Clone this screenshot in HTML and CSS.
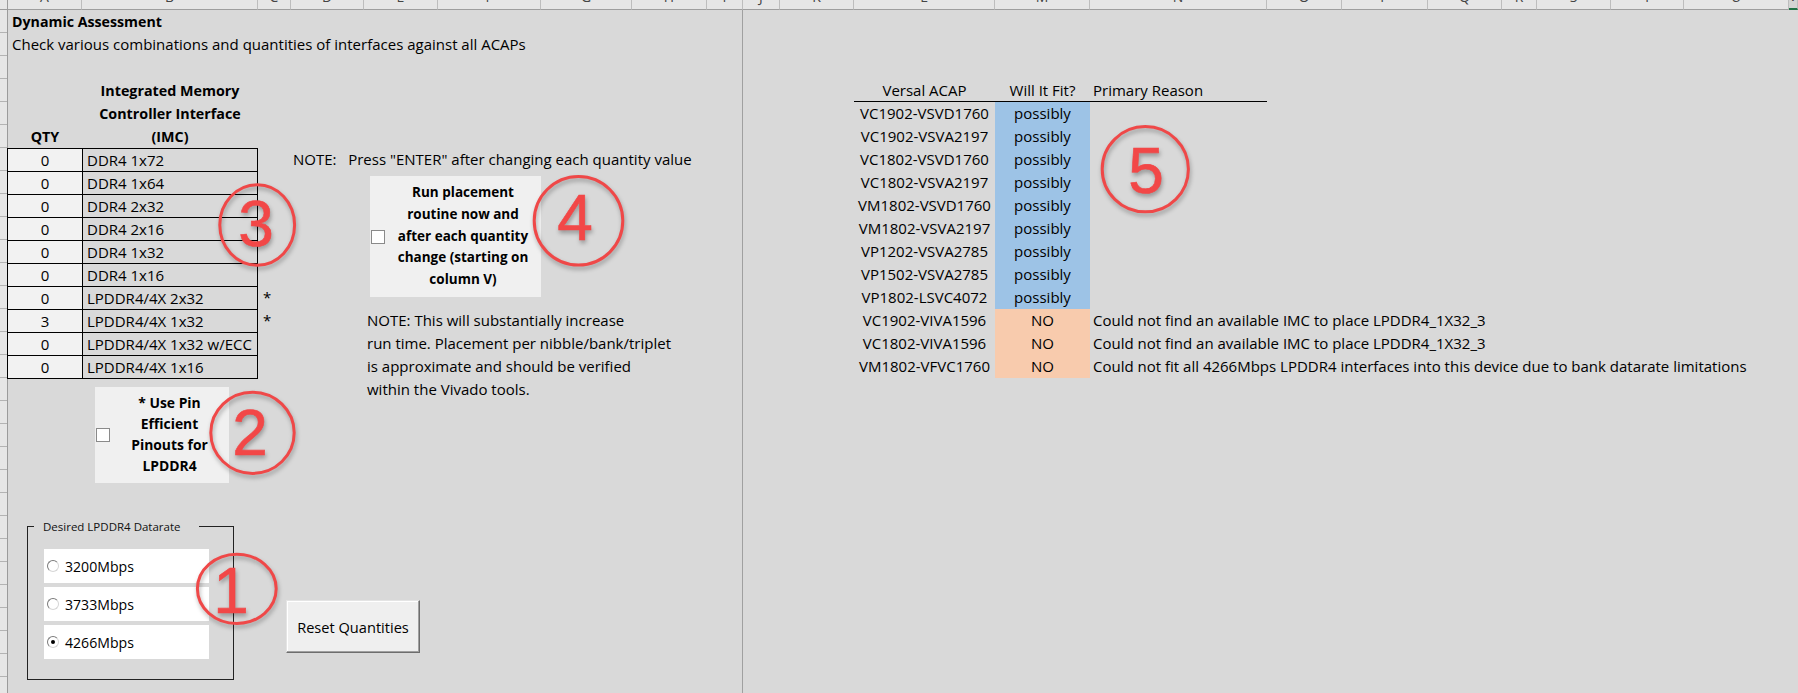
FILE: index.html
```html
<!DOCTYPE html>
<html lang="en">
<head>
<meta charset="utf-8">
<title>Dynamic Assessment</title>
<link rel="stylesheet" href="styles.css">
</head>
<body>
<div class="sheet">
  <div class="corner"></div>
  <div class="colhdr">
    <div class="ch"><span>A</span></div>
    <div class="ch"><span>B</span></div>
    <div class="ch"><span>C</span></div>
    <div class="ch"><span>D</span></div>
    <div class="ch"><span>E</span></div>
    <div class="ch"><span>F</span></div>
    <div class="ch"><span>G</span></div>
    <div class="ch"><span>H</span></div>
    <div class="ch"><span>I</span></div>
    <div class="ch"><span>J</span></div>
    <div class="ch"><span>K</span></div>
    <div class="ch"><span>L</span></div>
    <div class="ch"><span>M</span></div>
    <div class="ch"><span>N</span></div>
    <div class="ch"><span>O</span></div>
    <div class="ch"><span>P</span></div>
    <div class="ch"><span>Q</span></div>
    <div class="ch"><span>R</span></div>
    <div class="ch"><span>S</span></div>
    <div class="ch"><span>T</span></div>
    <div class="ch"><span>U</span></div>
    <div class="ch sel"><span>V</span></div>
  </div>
  <div class="rowhdr">
    <div class="rh"></div><div class="rh"></div><div class="rh"></div><div class="rh"></div><div class="rh"></div>
    <div class="rh"></div><div class="rh"></div><div class="rh"></div><div class="rh"></div><div class="rh"></div>
    <div class="rh"></div><div class="rh"></div><div class="rh"></div><div class="rh"></div><div class="rh"></div>
    <div class="rh"></div><div class="rh"></div><div class="rh"></div><div class="rh"></div><div class="rh"></div>
    <div class="rh"></div><div class="rh"></div><div class="rh"></div><div class="rh"></div><div class="rh"></div>
    <div class="rh"></div><div class="rh"></div><div class="rh"></div><div class="rh"></div><div class="rh"></div>
  </div>
  <div class="cells">
    <div class="freeze"></div>
    <div class="title">Dynamic Assessment</div>
    <div class="subtitle">Check various combinations and quantities of interfaces against all ACAPs</div>
    <div class="imc-head">Integrated Memory<br>Controller Interface<br>(IMC)</div>
    <div class="qty-head">QTY</div>
    <div class="imc-table">
      <div class="qty">0</div><div class="name">DDR4 1x72</div>
      <div class="qty">0</div><div class="name">DDR4 1x64</div>
      <div class="qty">0</div><div class="name">DDR4 2x32</div>
      <div class="qty">0</div><div class="name">DDR4 2x16</div>
      <div class="qty">0</div><div class="name">DDR4 1x32</div>
      <div class="qty">0</div><div class="name">DDR4 1x16</div>
      <div class="qty">0</div><div class="name">LPDDR4/4X 2x32</div>
      <div class="qty">3</div><div class="name">LPDDR4/4X 1x32</div>
      <div class="qty">0</div><div class="name">LPDDR4/4X 1x32 w/ECC</div>
      <div class="qty">0</div><div class="name">LPDDR4/4X 1x16</div>
    </div>
    <div class="stars"><div>*</div><div>*</div></div>
    <div class="note1">NOTE:   Press "ENTER" after changing each quantity value</div>
    <div class="note2">
      <div>NOTE: This will substantially increase</div>
      <div>run time. Placement per nibble/bank/triplet</div>
      <div>is approximate and should be verified</div>
      <div>within the Vivado tools.</div>
    </div>
    <div class="fit">
      <div class="hd dev">Versal ACAP</div><div class="hd res">Will It Fit?</div><div class="hd why">Primary Reason</div>
      <div class="dev">VC1902-VSVD1760</div><div class="res yes">possibly</div><div class="why"></div>
      <div class="dev">VC1902-VSVA2197</div><div class="res yes">possibly</div><div class="why"></div>
      <div class="dev">VC1802-VSVD1760</div><div class="res yes">possibly</div><div class="why"></div>
      <div class="dev">VC1802-VSVA2197</div><div class="res yes">possibly</div><div class="why"></div>
      <div class="dev">VM1802-VSVD1760</div><div class="res yes">possibly</div><div class="why"></div>
      <div class="dev">VM1802-VSVA2197</div><div class="res yes">possibly</div><div class="why"></div>
      <div class="dev">VP1202-VSVA2785</div><div class="res yes">possibly</div><div class="why"></div>
      <div class="dev">VP1502-VSVA2785</div><div class="res yes">possibly</div><div class="why"></div>
      <div class="dev">VP1802-LSVC4072</div><div class="res yes">possibly</div><div class="why"></div>
      <div class="dev">VC1902-VIVA1596</div><div class="res no">NO</div><div class="why">Could not find an available IMC to place LPDDR4_1X32_3</div>
      <div class="dev">VC1802-VIVA1596</div><div class="res no">NO</div><div class="why">Could not find an available IMC to place LPDDR4_1X32_3</div>
      <div class="dev">VM1802-VFVC1760</div><div class="res no">NO</div><div class="why">Could not fit all 4266Mbps LPDDR4 interfaces into this device due to bank datarate limitations</div>
    </div>
  </div>

  <div class="ctl cb4">
    <div class="chk"></div>
    <div class="ctl-label">Run placement<br>routine now and<br>after each quantity<br>change (starting on<br>column V)</div>
  </div>
  <div class="ctl cb2">
    <div class="chk"></div>
    <div class="ctl-label">* Use Pin<br>Efficient<br>Pinouts for<br>LPDDR4</div>
  </div>

  <div class="group">
    <div class="legend">Desired LPDDR4 Datarate</div>
    <div class="radios">
      <div class="opt"><span class="radio"></span>3200Mbps</div>
      <div class="opt"><span class="radio"></span>3733Mbps</div>
      <div class="opt"><span class="radio on"></span>4266Mbps</div>
    </div>
  </div>

  <div class="btn">Reset Quantities</div>

  <svg class="marks" width="1798" height="693" viewBox="0 0 1798 693">
    <ellipse cx="236.8" cy="588.8" rx="39.4" ry="34.6"/>
    <text x="231" y="613">1</text>
    <ellipse cx="252.5" cy="432.8" rx="41.7" ry="40.6"/>
    <text x="250" y="455">2</text>
    <ellipse cx="257.2" cy="225" rx="37.4" ry="40.2"/>
    <text x="256" y="246">3</text>
    <ellipse cx="578.5" cy="220.8" rx="44.3" ry="44.3"/>
    <text x="575" y="240">4</text>
    <ellipse cx="1145.3" cy="169.2" rx="43.1" ry="42.6"/>
    <text x="1146" y="193">5</text>
  </svg>
</div>
</body>
</html>
```
FILE: styles.css
```css
* { box-sizing: border-box; }
html, body { margin: 0; padding: 0; }
body {
  background: #d9d9d9;
  font-family: "Open Sans", "Liberation Sans", sans-serif;
  color: #000;
}
.sheet {
  --cols: 74px 176px 33px 73px 74px 103px 91px 75px 36px 37px 74px 141px 95px 177px 75px 86px 74px 35px 74px 73px 105px 1fr;
  position: relative;
  width: 1798px;
  height: 693px;
  overflow: hidden;
  display: grid;
  grid-template-columns: 8px 1fr;
  grid-template-rows: 10px 1fr;
  background: #d9d9d9;
}
.corner {
  background: #e6e6e6;
  border-right: 1px solid #9b9b9b;
  border-bottom: 1px solid #9b9b9b;
}
.colhdr {
  display: grid;
  grid-template-columns: var(--cols);
  background: #e6e6e6;
}
.ch {
  border-right: 1px solid #bdbdbd;
  border-bottom: 1px solid #9e9e9e;
  overflow: hidden;
  display: flex;
  justify-content: center;
  align-items: flex-end;
  font-size: 14px;
  color: #444;
}
.ch span { line-height: 14px; margin-bottom: 5px; }
.ch.sel { border-bottom: 2px solid #217346; background: #d4d4d4; }
.rowhdr {
  display: flex;
  flex-direction: column;
  background: #e6e6e6;
  border-right: 1px solid #9b9b9b;
  overflow: hidden;
}
.rh { height: 23px; flex: none; border-bottom: 1px solid #b3b3b3; }

.cells {
  display: grid;
  grid-template-columns: var(--cols);
  grid-template-rows: repeat(30, 23px);
  font-size: 15px;
  line-height: 23px;
  white-space: nowrap;
}
.cells > * { min-width: 0; }
.freeze { grid-column: 9; grid-row: 1 / 31; border-right: 1px solid #a0a0a0; }
.title { grid-column: 1 / 8; grid-row: 1; font-weight: 700; font-size: 14.2px; padding-left: 4px; }
.subtitle { grid-column: 1 / 8; grid-row: 2; padding-left: 4px; }
.imc-head { grid-column: 2; grid-row: 4 / 7; font-weight: 700; font-size: 14.3px; text-align: center; }
.qty-head { grid-column: 1; grid-row: 6; font-weight: 700; font-size: 14.3px; text-align: center; }

.imc-table {
  grid-column: 1 / 3;
  grid-row: 7 / 17;
  align-self: start;
  margin-left: -1px;
  display: grid;
  grid-template-columns: 75px 1fr;
  grid-auto-rows: 23px;
  border-top: 1px solid #000;
  border-left: 1px solid #000;
  line-height: 22px;
}
.qty {
  background: #f2f2f2;
  text-align: center;
  border-right: 1px solid #000;
  border-bottom: 1px solid #000;
}
.name {
  padding-left: 4px;
  border-right: 1px solid #000;
  border-bottom: 1px solid #000;
}
.stars { grid-column: 3; grid-row: 13 / 15; padding-left: 5px; }
.note1 { grid-column: 4; grid-row: 7; padding-left: 2px; white-space: pre; }
.note2 { grid-column: 5; grid-row: 14 / 18; padding-left: 3px; }

.fit {
  grid-column: 12 / 15;
  grid-row: 4 / 17;
  display: grid;
  grid-template-columns: 141px 95px 177px;
  grid-auto-rows: 23px;
}
.fit .hd { border-bottom: 1px solid #000; line-height: 22px; }
.dev { text-align: center; }
.res { text-align: center; }
.res.yes { background: #9dc3e6; }
.res.no { background: #f8cbad; }
.why { padding-left: 3px; }

.ctl {
  position: absolute;
  background: #f0f0f0;
  display: flex;
  align-items: center;
}
.chk {
  width: 14px;
  height: 14px;
  flex: none;
  margin-left: 1px;
  background: #fff;
  border: 1px solid #8a8a8a;
}
.ctl-label {
  flex: 1;
  text-align: center;
  font-weight: 700;
  font-size: 13.9px;
  white-space: nowrap;
}
.cb4 { left: 370px; top: 176px; width: 171px; height: 121px; }
.cb4 .ctl-label { line-height: 21.7px; font-size: 13.5px; }
.cb2 { left: 95px; top: 387px; width: 134px; height: 96px; }
.cb2 .ctl-label { line-height: 20.8px; }

.group {
  position: absolute;
  left: 27px;
  top: 526px;
  width: 207px;
  height: 154px;
  border: 1px solid #222;
}
.legend {
  position: absolute;
  left: 6px;
  top: -8px;
  padding: 0 18px 0 9px;
  background: #d9d9d9;
  font-size: 11.5px;
  line-height: 15px;
  color: #111;
  white-space: nowrap;
}
.radios {
  display: flex;
  flex-direction: column;
  gap: 4px;
  padding: 22px 0 0 16px;
}
.opt {
  width: 165px;
  height: 34px;
  background: #fff;
  display: flex;
  align-items: center;
  font-size: 14.1px;
}
.radio {
  position: relative;
  width: 12px;
  height: 12px;
  flex: none;
  margin: 0 6px 0 3px;
  border-radius: 50%;
  background: #fff;
  border: 1px solid;
  border-color: #7a7a7a #d6d6d6 #d6d6d6 #7a7a7a;
}
.radio.on::after {
  content: "";
  position: absolute;
  left: 3px;
  top: 3px;
  width: 4px;
  height: 4px;
  border-radius: 50%;
  background: #000;
}
.btn {
  position: absolute;
  left: 286px;
  top: 600px;
  width: 134px;
  height: 53px;
  background: #efefef;
  border: 1px solid;
  border-color: #e4e4e4 #6d6d6d #6d6d6d #e4e4e4;
  box-shadow: inset -1px -1px 0 #a0a0a0, inset 1px 1px 0 #ffffff;
  display: flex;
  align-items: center;
  justify-content: center;
  font-size: 14.6px;
  white-space: nowrap;
}
.marks {
  position: absolute;
  left: 0;
  top: 0;
  pointer-events: none;
  filter: drop-shadow(1px 3px 2px rgba(0, 0, 0, 0.3));
}
.marks ellipse { fill: none; stroke: #ef4848; stroke-width: 3; }
.marks text {
  font-family: "Liberation Sans", Arial, sans-serif;
  font-size: 64px;
  fill: #f24747;
  stroke: #f24747;
  stroke-width: 0.6;
  text-anchor: middle;
}
```
